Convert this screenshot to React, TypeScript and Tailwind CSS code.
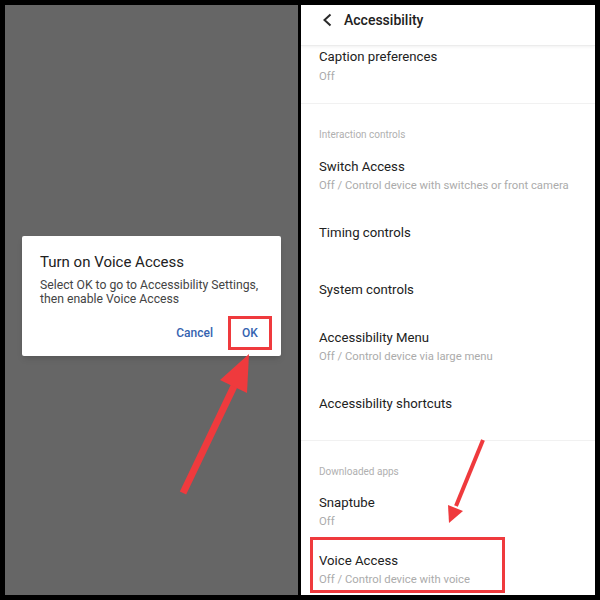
import React from "react";

type Item = { title: string; sub?: string };

const interaction: Item[] = [
  { title: "Switch Access", sub: "Off / Control device with switches or front camera" },
  { title: "Timing controls" },
  { title: "System controls" },
  { title: "Accessibility Menu", sub: "Off / Control device via large menu" },
  { title: "Accessibility shortcuts" },
];

function Row({ title, sub }: Item) {
  return (
    <div className="flex h-[57px] flex-col justify-center px-[18px] pb-[1px]">
      <p className="text-[13.2px] leading-[18px] text-[#212121]">{title}</p>
      {sub ? <p className="mt-[2px] text-[11.3px] leading-[16px] text-[#ababab]">{sub}</p> : null}
    </div>
  );
}

function SectionLabel({ label }: { label: string }) {
  return (
    <div className="flex h-[44px] items-end px-[18px] pb-[6px]">
      <p className="text-[10px] leading-[14px] text-[#b0b0b0]">{label}</p>
    </div>
  );
}

function ConfirmDialog() {
  return (
    <div className="rounded-[2px] bg-white pl-[18px] pr-[9px] pt-[16px] pb-[6px] shadow-md">
      <h2 className="text-[15px] leading-[20px] text-[#212121]">Turn on Voice Access</h2>
      <p className="mt-[6px] text-[12.2px] leading-[14px] text-[#444]">
        Select OK to go to Accessibility Settings,
        <br />
        then enable Voice Access
      </p>
      <div className="mt-[10px] flex items-center justify-end gap-[15px]">
        <button type="button" className="text-[12px] font-medium text-[#3563b0]">
          Cancel
        </button>
        <button
          type="button"
          className="flex h-[34px] w-[44px] items-center justify-center border-[3px] border-[#ef3a3d] text-[12px] font-medium text-[#3563b0]"
        >
          OK
        </button>
      </div>
    </div>
  );
}

function Arrows() {
  return (
    <svg className="pointer-events-none absolute inset-0" width="600" height="600" viewBox="0 0 600 600">
      <line x1="183" y1="493" x2="236" y2="382" stroke="#ef3a3d" strokeWidth="7" />
      <polygon points="249,354 220,380 247,393" fill="#ef3a3d" />
      <line x1="483" y1="440" x2="456" y2="506" stroke="#ef3a3d" strokeWidth="4" />
      <polygon points="449,523 448,505 463,511" fill="#ef3a3d" />
    </svg>
  );
}

export default function App() {
  return (
    <div className="relative flex h-[600px] w-[600px] gap-[3px] bg-black p-[5px] font-['Roboto',sans-serif]">
      <div className="w-[293px] shrink-0 bg-[#666666] px-[17px] pt-[231px]">
        <ConfirmDialog />
      </div>

      <div className="flex w-[294px] shrink-0 flex-col overflow-hidden bg-white">
        <header className="flex h-[41px] shrink-0 items-center gap-[11px] border-b border-[#ececec] pb-[10px] pl-[21px] shadow-[0_1px_3px_rgba(0,0,0,0.06)]">
          <svg width="11" height="14" viewBox="0 0 11 14" aria-hidden>
            <polyline points="8.5,1.5 2.5,7 8.5,12.5" fill="none" stroke="#2a2a2a" strokeWidth="2" />
          </svg>
          <h1 className="text-[14px] font-medium text-[#212121]">Accessibility</h1>
        </header>

        <div className="h-[57px] shrink-0 px-[18px] pt-[2px]">
          <p className="text-[13.2px] leading-[18px] text-[#212121]">Caption preferences</p>
          <p className="mt-[3px] text-[11.3px] leading-[16px] text-[#ababab]">Off</p>
        </div>
        <div className="h-px shrink-0 bg-[#f1f1f1]" />

        <SectionLabel label="Interaction controls" />
        {interaction.map((item) => (
          <Row key={item.title} {...item} />
        ))}
        <div className="h-[7px] shrink-0" />
        <div className="h-px shrink-0 bg-[#f1f1f1]" />

        <SectionLabel label="Downloaded apps" />
        <div className="shrink-0 px-[18px] pt-[9px]">
          <p className="text-[13.2px] leading-[18px] text-[#212121]">Snaptube</p>
          <p className="mt-[2px] text-[11.3px] leading-[16px] text-[#ababab]">Off</p>
        </div>
        <div className="ml-[9px] mt-[7px] w-[195px] shrink-0 border-[3px] border-[#ef3a3d] pl-[6px] pt-[12px] pb-[2px]">
          <p className="text-[13.2px] leading-[18px] text-[#212121]">Voice Access</p>
          <p className="mt-[2px] text-[11.3px] leading-[16px] text-[#ababab]">Off / Control device with voice</p>
        </div>
      </div>

      <Arrows />
    </div>
  );
}
